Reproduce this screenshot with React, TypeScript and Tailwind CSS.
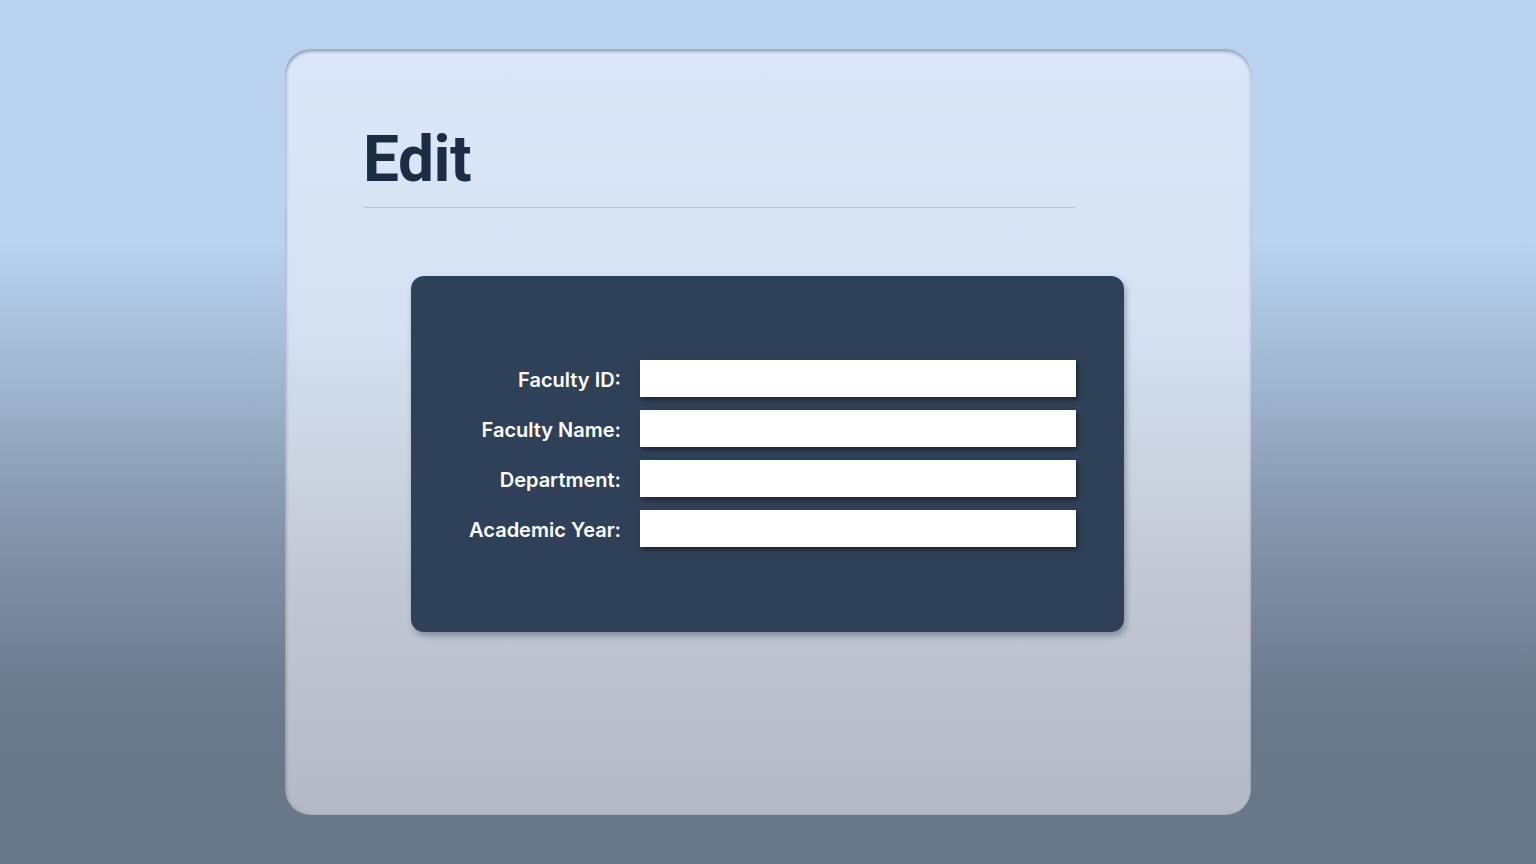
const fields = ['Faculty ID:', 'Faculty Name:', 'Department:', 'Academic Year:']

export default function App() {
  return (
    <div className="h-[864px] w-full bg-[linear-gradient(180deg,#b8d2f0_0%,#b8d2f0_28%,#9db2cc_46%,#8596ad_60%,#7a8aa0_69%,#6b7a8d_81%,#687889_88%,#687889_100%)] pt-[49px] pb-[49px] font-['Roboto',sans-serif]">
      <div className="ml-[285px] h-[766px] w-[966px] rounded-[26px] bg-[linear-gradient(180deg,#dbe7f8_0%,#d6e2f2_35%,#c1c8d3_70%,#b3bac5_100%)] pl-[78px] pt-[79px] shadow-[inset_0_3px_3px_rgba(60,70,90,0.35),inset_2px_0_3px_rgba(60,70,90,0.15)]">
        <h1 className="text-[64px] font-bold leading-none tracking-[-0.5px] text-[#1b2d45]">Edit</h1>
        <div className="mt-[15px] h-px w-[712px] bg-[#c9c1b9]" />

        <div className="ml-[48px] mt-[68px] w-[713px] rounded-[13px] bg-[#2f4158] pt-[84px] pb-[85px] shadow-[2px_4px_6px_rgba(30,40,60,0.35)]">
          <div className="flex flex-col gap-[13px]">
            {fields.map(label => (
              <div key={label} className="flex items-center">
                <label className="w-[210px] pt-[2px] text-right font-['Inter',sans-serif] text-[20px] font-semibold text-white">
                  {label}
                </label>
                <input
                  type="text"
                  className="ml-[19px] h-[37px] w-[436px] bg-white px-2 text-black shadow-[2px_3px_4px_rgba(10,20,35,0.55)] outline-none"
                />
              </div>
            ))}
          </div>
        </div>
      </div>
    </div>
  )
}
